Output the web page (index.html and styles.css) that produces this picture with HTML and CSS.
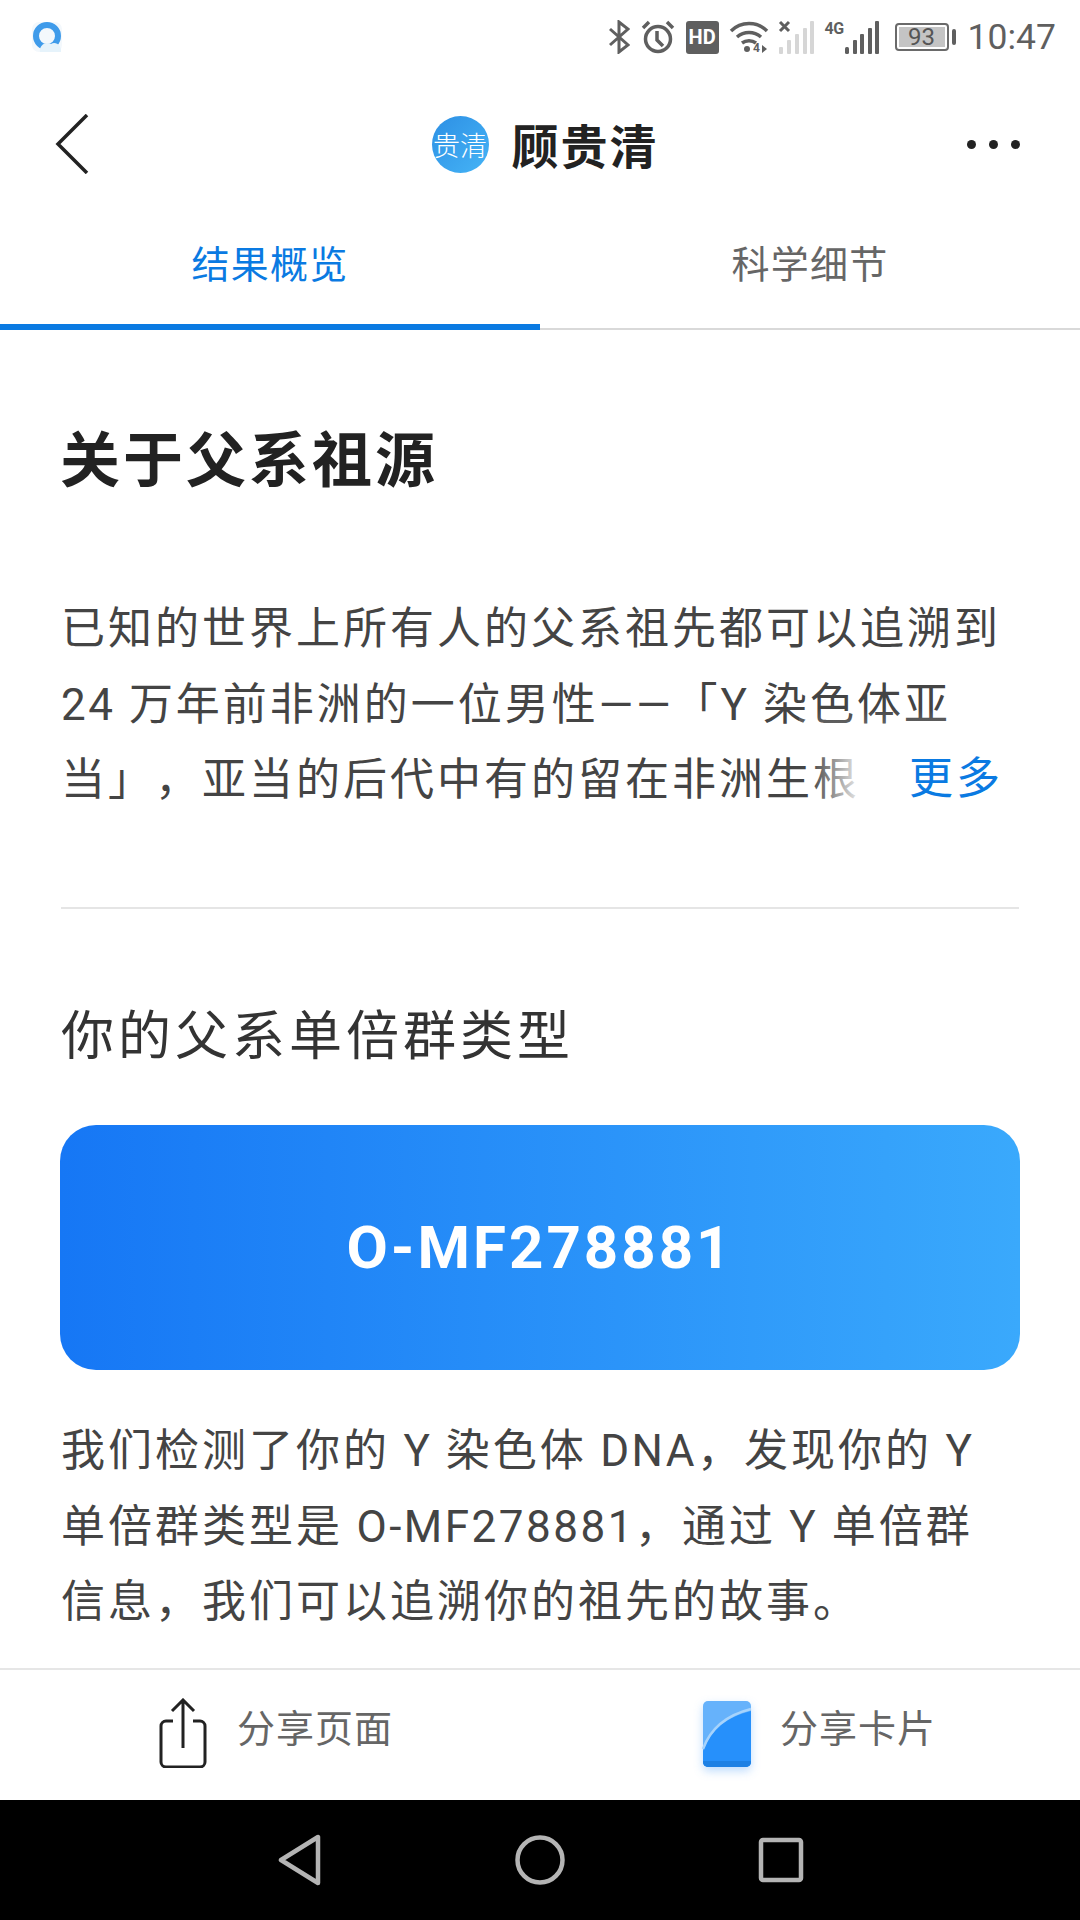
FILE: index.html
```html
<!DOCTYPE html>
<html lang="zh-CN">
<head>
<meta charset="utf-8">
<title>关于父系祖源</title>
<link rel="stylesheet" href="styles.css">
</head>
<body>
<div class="page">
  <div class="statusbar">
    <svg class="app-icon" width="34" height="34" viewBox="0 0 34 34">
      <rect x="2" y="2" width="30" height="30" rx="7" fill="#f3f8fc"/>
      <circle cx="17" cy="16" r="11" fill="none" stroke="#3f9bea" stroke-width="6"/>
      <path d="M10 32c-1-6 5-11 11-8 5-3 11 2 10 8z" fill="#e6f3fb"/>
    </svg>
    <div class="status-right">
      <svg class="si-bt" width="22" height="34" viewBox="0 0 22 34" fill="none" stroke="#5f5f5f" stroke-width="3"><path d="M2 9l18 16-9 7V2l9 7L2 25"/></svg>
      <svg class="si-alarm" width="34" height="34" viewBox="0 0 34 34" fill="none" stroke="#5f5f5f" stroke-width="3.500"><circle cx="17" cy="19" r="12.500"/><path d="M16 11v9l6 6M2 8l6-6M32 8l-6-6"/></svg>
      <div class="hd">HD</div>
      <svg class="si-wifi" width="40" height="34" viewBox="0 0 40 34" fill="none" stroke="#5f5f5f" stroke-width="3.500"><path d="M2 11c10-10 26-10 36 0M8 17c7-6 17-6 24 0M13 23c4-3 10-3 14 0"/><circle cx="18" cy="29" r="3" fill="#5f5f5f" stroke="none"/><text class="wifi-four" x="24" y="32">4</text><path d="M33 25v8l5-4z" fill="#5f5f5f" stroke="none"/></svg>
      <svg class="si-sim" width="36" height="34" viewBox="0 0 36 34"><path d="M2 2l9 9M11 2l-9 9" stroke="#5f5f5f" stroke-width="3"/><g fill="#d6d6d6"><rect x="1" y="27" width="4" height="7" rx="1"/><rect x="9" y="20" width="4" height="14" rx="1"/><rect x="17" y="14" width="4" height="20" rx="1"/><rect x="25" y="8" width="4" height="26" rx="1"/><rect x="32" y="1" width="4" height="33" rx="1"/></g></svg>
      <div class="signal">
        <span class="net">4G</span>
        <svg width="34" height="34" viewBox="0 0 34 34" fill="#5f5f5f"><rect x="0" y="27" width="4" height="7" rx="1.500"/><rect x="8" y="20" width="4" height="14" rx="1"/><rect x="15" y="14" width="4" height="20" rx="1"/><rect x="23" y="8" width="4" height="26" rx="1"/><rect x="30" y="1" width="4" height="33" rx="1"/></svg>
      </div>
      <div class="battery"><div class="battery-body"><span class="battery-fill">93</span></div><div class="battery-tip"></div></div>
      <span class="time">10:47</span>
    </div>
  </div>

  <header class="header">
    <svg class="back" width="34" height="60" viewBox="0 0 34 60" fill="none" stroke="#222" stroke-width="3.500"><path d="M32 1L3 30l29 29"/></svg>
    <div class="title-group">
      <div class="avatar">贵清</div>
      <h1 class="name">顾贵清</h1>
    </div>
    <div class="dots"><i></i><i></i><i></i></div>
  </header>

  <nav class="tabs">
    <div class="tab active">结果概览</div>
    <div class="tab">科学细节</div>
  </nav>

  <main class="content">
    <h2 class="section-title">关于父系祖源</h2>
    <div class="intro">
      <p class="body-text">已知的世界上所有人的父系祖先都可以追溯到<br><span class="lat">24 </span>万年前非洲的一位男性——「<span class="lat">Y </span>染色体亚<br>当」，亚当的后代中有的留在非洲生根</p>
      <div class="fade-line"></div>
      <div class="more"><span class="more-fade"></span><span class="more-link">更多</span></div>
    </div>
    <hr class="divider">
    <h3 class="sub-title">你的父系单倍群类型</h3>
    <div class="hap-card">O-MF278881</div>
    <p class="body-text desc">我们检测了你的<span class="lat"> Y </span>染色体<span class="lat"> DNA</span>，发现你的<span class="lat"> Y</span><br>单倍群类型是<span class="lat"> O-MF278881</span>，通过<span class="lat"> Y </span>单倍群<br>信息，我们可以追溯你的祖先的故事。</p>
  </main>

  <footer class="share-bar">
    <div class="share share-page">
      <svg width="48" height="70" viewBox="0 0 48 70" fill="none" stroke="#222" stroke-width="3"><path d="M14 23H7a5 5 0 0 0-5 5v36a5 5 0 0 0 5 5h34a5 5 0 0 0 5-5V28a5 5 0 0 0-5-5h-7M24 50V2M13 13L24 2l11 11"/></svg>
      <span>分享页面</span>
    </div>
    <div class="share share-card">
      <svg width="52" height="72" viewBox="0 0 52 72">
        <rect x="2" y="2" width="48" height="66" rx="5" fill="#66b2fb"/>
        <path d="M2 52C10 30 26 18 50 12V63a5 5 0 0 1-5 5H7a5 5 0 0 1-5-5z" fill="#2690fb"/>
        <path d="M2 50C10 28 26 16 50 10" fill="none" stroke="#a6d3fc" stroke-width="2.500"/>
        <path d="M2 63a5 5 0 0 0 5 5h38a5 5 0 0 0 5-5v-1H2z" fill="#1d80e4"/>
      </svg>
      <span>分享卡片</span>
    </div>
  </footer>

  <div class="navbar">
    <svg width="44" height="52" viewBox="0 0 44 52" fill="none" stroke="#b4b4b4" stroke-width="4.500" stroke-linejoin="round"><path d="M40 3v46L3 26z"/></svg>
    <svg width="50" height="52" viewBox="0 0 50 52" fill="none" stroke="#b4b4b4" stroke-width="4.500"><circle cx="25" cy="26" r="22.500"/></svg>
    <svg width="46" height="46" viewBox="0 0 46 46" fill="none" stroke="#b4b4b4" stroke-width="4.500" stroke-linejoin="round"><rect x="3" y="3" width="40" height="40" rx="2"/></svg>
  </div>
</div>
</body>
</html>
```
FILE: styles.css
```css
* { box-sizing: border-box; }
html, body { margin: 0; padding: 0; background: #fff; }
body { font-family: Roboto, "Noto Sans CJK SC", sans-serif; color: #444; text-spacing-trim: space-all; }
.page { width: 1080px; height: 1920px; display: flex; flex-direction: column; overflow: hidden; }

.statusbar { height: 74px; flex: none; display: flex; align-items: center; justify-content: space-between; padding: 0 24px 0 30px; }
.app-icon { filter: blur(.7px); }
.status-right { display: flex; align-items: center; }
.si-bt { margin-right: 11px; }
.si-alarm { margin-right: 11px; }
.hd { width: 33px; height: 33px; background: #5f5f5f; border-radius: 3px; color: #fff; font-size: 20px; font-weight: 700; line-height: 33px; text-align: center; margin-right: 10px; }
.si-wifi { margin-right: 9px; }
.wifi-four { font-family: Roboto, sans-serif; font-size: 12px; font-weight: 700; fill: #5f5f5f; stroke: none; }
.si-sim { margin-right: 11px; }
.signal { display: flex; align-items: flex-start; margin-right: 16px; height: 34px; }
.net { font-size: 16px; font-weight: 700; color: #5f5f5f; line-height: 18px; margin-right: 1px; width: 19px; letter-spacing: -.5px; white-space: nowrap; }
.battery { display: flex; align-items: center; margin-right: 12px; }
.battery-body { width: 54px; height: 28px; border: 2px solid #6a6a6a; border-radius: 4px; padding: 2px; }
.battery-fill { display: block; width: 46px; height: 20px; background: #c4c4c4; color: #555; font-size: 24px; line-height: 20px; text-align: center; }
.battery-tip { width: 4px; height: 16px; background: #5f5f5f; border-radius: 2px; margin-left: 3px; }
.time { font-size: 35.500px; color: #5f5f5f; line-height: 40px; }

.header { height: 140px; flex: none; display: grid; grid-template-columns: 1fr auto 1fr; align-items: center; padding: 0 60px 0 55px; }
.back { justify-self: start; }
.title-group { display: flex; align-items: center; gap: 23px; margin-left: 15px; }
.avatar { width: 57px; height: 57px; border-radius: 50%; background: linear-gradient(135deg, #2d8fe4, #45b4f6); color: #fff; font-family: "Noto Sans CJK SC", sans-serif; font-size: 27px; font-weight: 300; line-height: 57px; text-align: center; white-space: nowrap; }
.name { margin: 0; font-family: "Noto Sans CJK SC", sans-serif; font-size: 47px; font-weight: 700; line-height: 60px; color: #222; letter-spacing: 2px; }
.dots { justify-self: end; display: flex; gap: 13px; }
.dots i { display: block; width: 9px; height: 9px; border-radius: 50%; background: #222; }

.tabs { height: 116px; flex: none; display: grid; grid-template-columns: 1fr 1fr; }
.tab { display: flex; align-items: center; justify-content: center; padding-bottom: 20px; font-family: "Noto Sans CJK SC", sans-serif; font-size: 38px; color: #666; letter-spacing: 1.200px; border-bottom: 2px solid #d9d9d9; }
.tab.active { color: #0a7ae2; border-bottom: 6px solid #0a7ae2; padding-bottom: 16px; }

.content { flex: 1; padding: 86px 61px 0; font-family: Roboto, "Noto Sans CJK SC", sans-serif; }
.section-title { margin: 0 0 0 -1px; font-family: "Noto Sans CJK SC", sans-serif; font-size: 60px; font-weight: 700; line-height: 80px; color: #222; letter-spacing: 3px; }
.intro { position: relative; margin-top: 96px; height: 225px; }
.body-text { margin: 0; font-size: 44px; line-height: 75.500px; letter-spacing: 3px; color: #444; white-space: nowrap; font-weight: 400; }
.lat { letter-spacing: 2.500px; }
.fade-line { position: absolute; right: 0; top: 75px; width: 220px; height: 75px; background: linear-gradient(to bottom, rgba(255,255,255,0) 55%, rgba(255,255,255,.35)); }
.more { position: absolute; right: 0; bottom: 0; height: 75px; display: flex; align-items: center; padding-bottom: 10px; background: #fff; }
.more-fade { position: absolute; right: 100%; top: 0; width: 55px; height: 75px; background: linear-gradient(to right, rgba(255,255,255,0), #fff); }
.more-link { width: 154px; padding-left: 44px; color: #0a7ae2; font-size: 44px; letter-spacing: 3px; white-space: nowrap; }
.divider { margin: 90px 0 0; border: 0; height: 2px; background: #e5e5e5; }
.sub-title { margin: 88px 0 0; font-family: "Noto Sans CJK SC", sans-serif; font-size: 53px; font-weight: 400; line-height: 70px; letter-spacing: 4px; color: #333; }
.hap-card { margin: 58px -1px 0; height: 245px; border-radius: 36px; background: linear-gradient(90deg, #1677f5, #3aa9fc); color: #fff; display: flex; align-items: center; justify-content: center; font-size: 60px; font-weight: 700; letter-spacing: 3px; }
.desc { margin-top: 44px; }

.share-bar { height: 132px; flex: none; border-top: 2px solid #e6e6e6; display: grid; grid-template-columns: 1fr 1fr; }
.share { display: flex; align-items: center; font-family: "Noto Sans CJK SC", sans-serif; font-size: 38px; color: #666; letter-spacing: 1px; }
.share span { margin-bottom: 20px; }
.share-page { padding-left: 159px; gap: 30px; }
.share-page svg { margin-bottom: 5px; }
.share-card { padding-left: 161px; gap: 27px; }
.share-card svg { filter: drop-shadow(0 4px 5px rgba(40,140,250,.3)); }

.navbar { height: 120px; flex: none; background: #000; display: flex; align-items: center; justify-content: center; gap: 193px; padding-left: 2px; }
```
